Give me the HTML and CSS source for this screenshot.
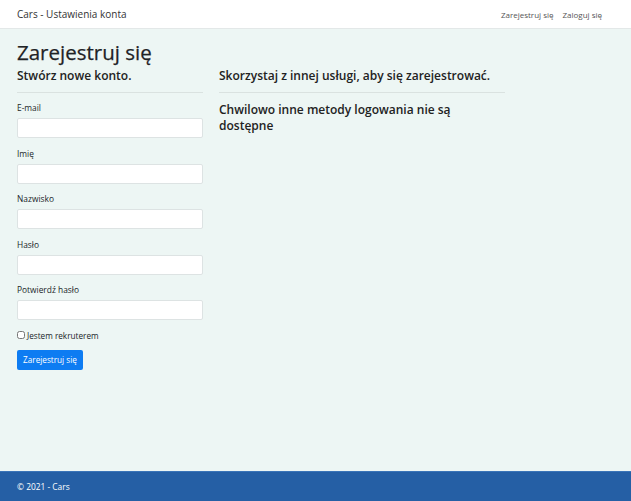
FILE: index.html
```html
<!DOCTYPE html>
<html lang="pl">
<head>
<meta charset="utf-8">
<title>Zarejestruj się - Cars</title>
<link rel="stylesheet" href="styles.css">
</head>
<body>
<header class="navbar">
  <a class="brand" href="#">Cars - Ustawienia konta</a>
  <nav class="nav-links">
    <a href="#">Zarejestruj się</a>
    <a href="#">Zaloguj się</a>
  </nav>
</header>
<main class="main">
  <h1 class="title">Zarejestruj się</h1>
  <div class="row">
    <section class="col-left">
      <h4 class="subtitle">Stwórz nowe konto.</h4>
      <hr class="divider">
      <div class="group"><label class="label">E-mail</label><input class="input" type="email"></div>
      <div class="group"><label class="label">Imię</label><input class="input" type="text"></div>
      <div class="group"><label class="label">Nazwisko</label><input class="input" type="text"></div>
      <div class="group"><label class="label">Hasło</label><input class="input" type="password"></div>
      <div class="group"><label class="label">Potwierdź hasło</label><input class="input" type="password"></div>
      <label class="check"><input class="check-box" type="checkbox">Jestem rekruterem</label>
      <button class="btn" type="submit">Zarejestruj się</button>
    </section>
    <section class="col-right">
      <h4 class="subtitle">Skorzystaj z innej usługi, aby się zarejestrować.</h4>
      <hr class="divider">
      <p class="info">Chwilowo inne metody logowania nie są dostępne</p>
    </section>
  </div>
</main>
<footer class="footer">© 2021 - Cars</footer>
</body>
</html>
```
FILE: styles.css
```css
* { box-sizing: border-box; }
html, body { margin: 0; padding: 0; }
body {
  min-height: 100vh;
  display: flex;
  flex-direction: column;
  background: #edf6f4;
  font-family: "Open Sans", "Noto Sans", sans-serif;
  color: #212529;
}
.navbar {
  height: 29px;
  background: #fff;
  border-bottom: 1px solid #e3e8e8;
  display: flex;
  align-items: center;
  justify-content: space-between;
  padding: 0 29px 0 17px;
}
.brand {
  font-size: 10px;
  color: #333;
  text-decoration: none;
}
.nav-links { display: flex; gap: 9px; }
.nav-links a {
  font-size: 8px;
  color: #555;
  text-decoration: none;
}
.main { flex: 1; padding: 0 17px; }
.title {
  margin: 11px 0 0;
  font-size: 20.5px;
  line-height: 24px;
  font-weight: 500;
  color: #1f2326;
  -webkit-text-stroke: 0.25px #1f2326;
}
.row { display: flex; gap: 16px; }
.col-left { width: 186px; display: flex; flex-direction: column; align-items: flex-start; }
.col-right { width: 286px; }
.subtitle {
  margin: 3px 0 0;
  font-size: 12px;
  line-height: 18px;
  font-weight: 600;
  color: #222;
}
.divider {
  margin: 7px 0 0;
  width: 100%;
  border: 0;
  border-top: 1px solid rgba(0,0,0,0.08);
  height: 0;
}
.col-left .divider { margin-bottom: 7px; }
.group { width: 100%; height: 45.5px; }
.label {
  display: block;
  font-size: 8.4px;
  line-height: 15px;
  margin-bottom: 3px;
  color: #212529;
}
.input {
  display: block;
  width: 100%;
  height: 20px;
  margin: 0;
  background: #fff;
  border: 1px solid #dde3e3;
  border-radius: 2px;
}
.check {
  display: flex;
  align-items: center;
  gap: 2px;
  font-size: 8.2px;
  line-height: 15px;
}
.check-box { width: 8px; height: 8px; margin: 0; }
.btn {
  margin-top: 7px;
  width: 66px;
  height: 20px;
  padding: 0;
  background: #0d7cf2;
  color: #fff;
  border: 0;
  border-radius: 2px;
  font-family: inherit;
  font-size: 8.2px;
}
.info {
  margin: 9px 0 0;
  font-size: 12px;
  line-height: 16px;
  font-weight: 600;
  color: #222;
}
.footer {
  height: 30px;
  background: #255fa5;
  border-top: 1px solid #3a74b8;
  color: #fff;
  font-size: 8.4px;
  display: flex;
  align-items: center;
  padding-left: 17px;
}
```
